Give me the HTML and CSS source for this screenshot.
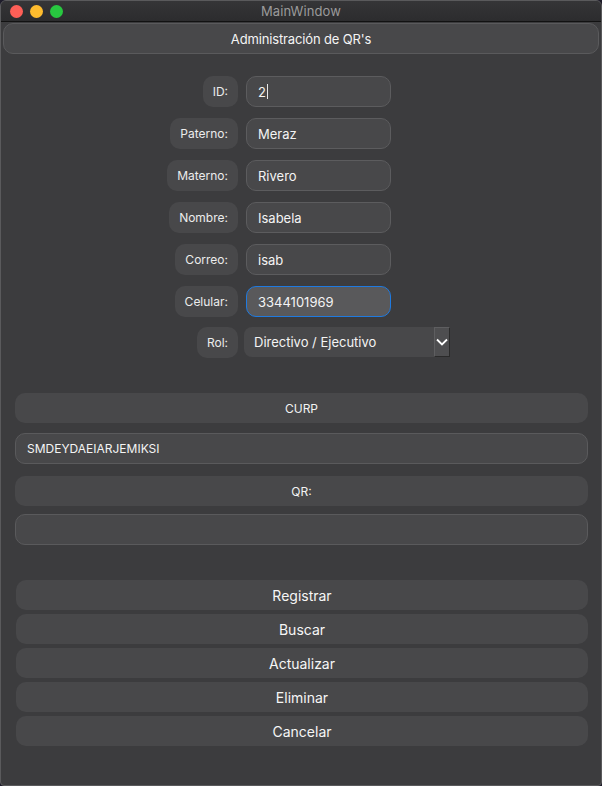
FILE: index.html
```html
<!DOCTYPE html>
<html lang="es">
<head>
<meta charset="utf-8">
<title>MainWindow</title>
<link rel="stylesheet" href="styles.css">
</head>
<body>
<div class="window">
  <div class="titlebar">
    <div class="lights">
      <span class="light red"></span>
      <span class="light yellow"></span>
      <span class="light green"></span>
    </div>
    <div class="title">MainWindow</div>
  </div>
  <div class="content">
    <div class="header">Administración de QR's</div>
    <div class="form">
      <div class="row"><div class="lblcol"><span class="lbl">ID:</span></div><div class="input">2<span class="caret"></span></div></div>
      <div class="row"><div class="lblcol"><span class="lbl">Paterno:</span></div><div class="input">Meraz</div></div>
      <div class="row"><div class="lblcol"><span class="lbl">Materno:</span></div><div class="input">Rivero</div></div>
      <div class="row"><div class="lblcol"><span class="lbl">Nombre:</span></div><div class="input">Isabela</div></div>
      <div class="row"><div class="lblcol"><span class="lbl">Correo:</span></div><div class="input">isab</div></div>
      <div class="row"><div class="lblcol"><span class="lbl">Celular:</span></div><div class="input focus">3344101969</div></div>
      <div class="row rol"><div class="lblcol"><span class="lbl">Rol:</span></div>
        <div class="combo"><span class="combo-text">Directivo / Ejecutivo</span>
          <span class="combo-btn"><svg width="12" height="8" viewBox="0 0 12 8"><path d="M1 1.5 L6 6.5 L11 1.5" fill="none" stroke="#fff" stroke-width="1.8"/></svg></span>
        </div>
      </div>
    </div>
    <div class="wide">
      <div class="bar">CURP</div>
      <div class="field">SMDEYDAEIARJEMIKSI</div>
      <div class="bar qr">QR:</div>
      <div class="field"></div>
    </div>
    <div class="buttons">
      <div class="btn">Registrar</div>
      <div class="btn">Buscar</div>
      <div class="btn">Actualizar</div>
      <div class="btn">Eliminar</div>
      <div class="btn">Cancelar</div>
    </div>
  </div>
</div>
</body>
</html>
```
FILE: styles.css
```css
* { box-sizing: border-box; }
html, body { margin: 0; padding: 0; background: #1e1c2a; }
body { font-family: Inter, "Noto Sans", sans-serif; color: #f2f2f2; }
.window {
  width: 602px; height: 786px;
  background: #3c3c3e;
  border: 1px solid #5a5a5c;
  border-radius: 6px 6px 4px 4px;
  overflow: hidden;
  display: flex; flex-direction: column;
}
.titlebar {
  height: 21px;
  background: linear-gradient(#353537, #2c2c2e);
  border-bottom: 1px solid #121212;
  display: flex; align-items: center; justify-content: center;
  position: relative;
  flex: none;
}
.lights { position: absolute; left: 9px; top: 4px; display: flex; gap: 7px; }
.light { width: 13px; height: 13px; border-radius: 50%; display: block; }
.red { background: #fe5f57; }
.yellow { background: #febc2e; }
.green { background: #28c840; }
.title { font-size: 13px; color: #9b9b9b; letter-spacing: 0.1px; }
.content { padding: 1px 2px 0 2px; display: flex; flex-direction: column; }
.header {
  height: 31px;
  background: #48484a;
  border: 1px solid #5a5a5c;
  border-radius: 10px;
  display: flex; align-items: center; justify-content: center;
  font-size: 13px; color: #f4f4f4; letter-spacing: -0.15px;
}
.form { padding-top: 22px; display: flex; flex-direction: column; gap: 11px; }
.row { display: flex; align-items: center; gap: 8px; height: 31px; }
.lblcol { width: 235px; display: flex; justify-content: flex-end; }
.lbl {
  height: 31px; padding: 0 10px;
  background: #48484a; border-radius: 10px;
  display: flex; align-items: center;
  font-size: 12px; color: #ececec;
}
.input {
  width: 145px; height: 31px;
  background: #48484a;
  border: 1px solid #5c5c5e;
  border-radius: 10px;
  padding: 0 11px;
  display: flex; align-items: center;
  font-size: 13px; color: #f4f4f4;
}
.caret { display: inline-block; width: 1px; height: 15px; background: #e8e8e8; margin-left: 1px; }
.input.focus { background: #59595b; border: 1.5px solid #1f7ae0; }
.row.rol { gap: 6px; margin-top: -1px; height: 30px; }
.combo {
  width: 206px; height: 30px;
  background: #48484a;
  border-radius: 8px 0 0 8px;
  display: flex; align-items: center; justify-content: space-between;
  padding-left: 10px;
  font-size: 13px; color: #f4f4f4;
}
.combo-btn {
  width: 16px; height: 30px;
  background: #4e4e50;
  border: 1px solid #2a2a2a;
  border-top-color: #5e5e60; border-left-color: #5e5e60;
  display: flex; align-items: center; justify-content: center;
}
.wide { padding: 36px 11px 0 12px; display: flex; flex-direction: column; gap: 10px; }
.bar {
  height: 30px; background: #48484a; border-radius: 10px;
  display: flex; align-items: center; justify-content: center;
  font-size: 12px; color: #f2f2f2;
}
.bar.qr { margin-top: 2px; }
.field {
  height: 31px; background: #48484a;
  border: 1px solid #5a5a5c; border-radius: 10px;
  display: flex; align-items: center; padding: 0 11px;
  font-size: 12px; color: #f4f4f4;
}
.wide .field:last-child { margin-top: -2px; }
.buttons { padding: 35px 11px 0 13px; display: flex; flex-direction: column; gap: 4px; }
.btn {
  height: 30px; background: #48484a; border-radius: 10px;
  display: flex; align-items: center; justify-content: center;
  font-size: 14px; color: #f6f6f6;
}
```
